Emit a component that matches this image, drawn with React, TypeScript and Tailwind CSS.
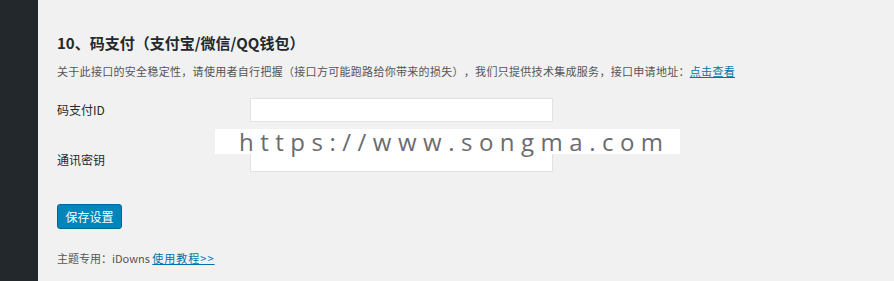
import React from "react";

export default function App() {
  const font = { fontFamily: '"Noto Sans CJK SC", "Noto Sans", sans-serif' };
  return (
    <div
      className="relative flex h-[281px] w-[894px] overflow-hidden bg-[#f1f1f1] [text-spacing-trim:space-all]"
      style={font}
    >
      <div className="h-full w-[38px] shrink-0 bg-[#23282d]" />
      <div className="flex flex-col pl-[19px] pt-[33px]">
        <h2 className="h-[20px] text-[15px] font-bold leading-[20px] text-[#23282d]">
          10、码支付（支付宝/微信/QQ钱包）
        </h2>
        <p className="mt-[10px] h-[16px] whitespace-nowrap text-[11px] leading-[16px] tracking-[0.3px] text-[#555]">
          关于此接口的安全稳定性，请使用者自行把握（接口方可能跑路给你带来的损失），我们只提供技术集成服务，接口申请地址：
          <a className="text-[#0073aa] underline">点击查看</a>
        </p>
        <div className="mt-[19px] flex h-[24px] items-center">
          <label className="w-[193px] text-[12px] leading-[16px] text-[#23282d]">码支付ID</label>
          <div className="h-[24px] w-[303px] border border-[#e2e2e2] bg-white" />
        </div>
        <div className="mt-[26px] flex h-[24px] items-center">
          <label className="w-[193px] text-[12px] leading-[16px] text-[#23282d]">通讯密钥</label>
          <div className="h-[24px] w-[303px] border border-[#e2e2e2] bg-white" />
        </div>
        <div className="mt-[32px]">
          <button className="flex h-[25px] w-[65px] items-center justify-center rounded-[3px] border border-[#006799] bg-[#0085ba] text-[12px] text-white">
            保存设置
          </button>
        </div>
        <p className="mt-[21px] text-[11px] leading-[16px] text-[#555]">
          主题专用：iDowns <a className="text-[#0073aa] underline tracking-[1px]">使用教程&gt;&gt;</a>
        </p>
      </div>
      <div
        className="absolute left-[215px] top-[129px] flex h-[25px] w-[465px] items-center bg-white pl-[24px] text-[24px] tracking-[6.5px] text-[#6b6b70]"
        style={{ fontFamily: '"Open Sans", sans-serif' }}
      >
        https://www.songma.com
      </div>
    </div>
  );
}
